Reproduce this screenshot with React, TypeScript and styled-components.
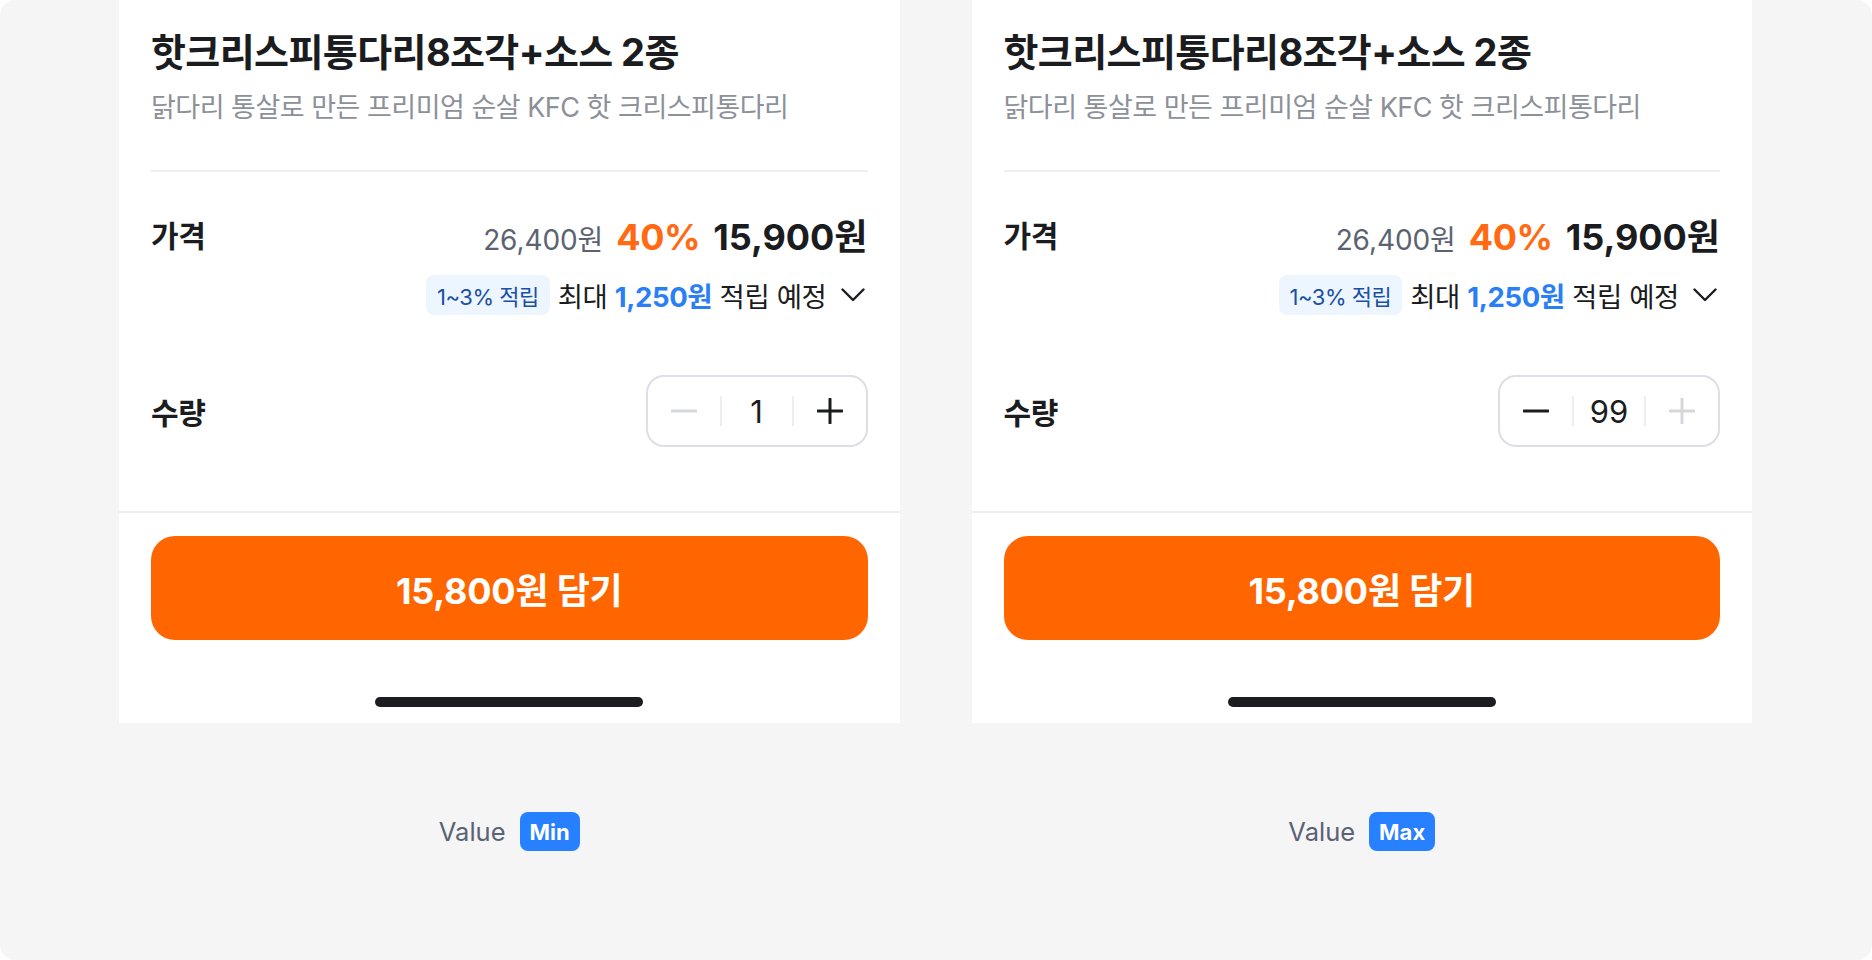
import React, { ReactElement } from 'react';
import styled, { createGlobalStyle } from 'styled-components';

const GlobalStyle = createGlobalStyle`
  * {
    box-sizing: border-box;
  }
  body {
    margin: 0;
    background: #ffffff;
    font-family: 'Inter', 'Noto Sans CJK KR', sans-serif;
  }
`;

const Frame = styled.div`
  width: 1872px;
  height: 960px;
  border-radius: 16px;
  background: #f5f5f5;
  display: flex;
  gap: 72px;
  padding: 0 120px 0 119px;
  overflow: hidden;
`;

const Column = styled.div`
  width: 781px;
  display: flex;
  flex-direction: column;
  align-items: center;
`;

const Card = styled.div`
  width: 100%;
  height: 723px;
  background: #ffffff;
  display: flex;
  flex-direction: column;
`;

const Body = styled.div`
  padding: 26px 32px 0;
  height: 511px;
`;

const Title = styled.div`
  font-size: 38px;
  line-height: 52px;
  font-weight: 700;
  color: #1b1c20;
  letter-spacing: -0.6px;
`;

const Subtitle = styled.div`
  margin-top: 10px;
  font-size: 27px;
  line-height: 40px;
  color: #8c9098;
  letter-spacing: -0.5px;
`;

const Divider = styled.div`
  height: 2px;
  background: #eeeff1;
  margin-top: 42px;
`;

const Row = styled.div<{ $top: number; $height: number }>`
  margin-top: ${(p) => p.$top}px;
  height: ${(p) => p.$height}px;
  display: flex;
  align-items: center;
  justify-content: space-between;
`;

const Label = styled.div`
  font-size: 30px;
  font-weight: 700;
  color: #1b1c20;
  letter-spacing: -0.3px;
`;

const Prices = styled.div`
  display: flex;
  align-items: baseline;
  gap: 13px;
`;

const Original = styled.span`
  font-size: 28px;
  color: #5b6372;
  letter-spacing: -0.1px;
`;

const Rate = styled.span`
  font-size: 36px;
  font-weight: 700;
  color: #ff6a13;
  letter-spacing: -0.4px;
`;

const Sale = styled.span`
  font-size: 36px;
  font-weight: 700;
  color: #1b1c20;
  letter-spacing: 0;
`;

const RewardRow = styled.div`
  margin-top: 19px;
  height: 40px;
  display: flex;
  justify-content: flex-end;
  align-items: center;
`;

const RewardBadge = styled.div`
  height: 40px;
  padding: 0 11px;
  border-radius: 8px;
  background: #edf5ff;
  color: #1a4fa6;
  font-size: 22px;
  letter-spacing: -0.5px;
  display: flex;
  align-items: center;
  margin-right: 8px;
`;

const RewardText = styled.div`
  font-size: 27.5px;
  color: #1b1c20;
  letter-spacing: -0.4px;
`;

const RewardAmount = styled.span`
  color: #2b7ff6;
  font-weight: 700;
`;

const Chevron = styled.svg`
  margin-left: 14px;
  margin-right: 3px;
`;

const Stepper = styled.div`
  width: 222px;
  height: 72px;
  border: 2px solid #dddfe4;
  border-radius: 18px;
  display: flex;
  align-items: center;
`;

const StepButton = styled.button<{ $disabled: boolean }>`
  width: 72px;
  height: 100%;
  border: none;
  background: none;
  padding: 0;
  display: flex;
  align-items: center;
  justify-content: center;
  color: ${(p) => (p.$disabled ? '#d4d7dc' : '#1b1c20')};
`;

const StepDivider = styled.div`
  width: 2px;
  height: 30px;
  background: #eceef0;
`;

const Count = styled.div`
  flex: 1;
  text-align: center;
  font-size: 31px;
  color: #1b1c20;
`;

const Footer = styled.div`
  border-top: 2px solid #eeeff1;
  padding: 23px 32px 0;
  display: flex;
  flex-direction: column;
  align-items: center;
`;

const CartButton = styled.button`
  width: 100%;
  height: 104px;
  border: none;
  border-radius: 24px;
  background: #ff6600;
  color: #ffffff;
  font-family: 'Inter', 'Noto Sans CJK KR', sans-serif;
  font-size: 36px;
  font-weight: 700;
  letter-spacing: -0.2px;
`;

const HomeIndicator = styled.div`
  margin-top: 57px;
  width: 268px;
  height: 10px;
  border-radius: 5px;
  background: #1c1d21;
`;

const Caption = styled.div`
  margin-top: 89px;
  display: flex;
  align-items: center;
  gap: 14px;
  font-family: 'Inter', sans-serif;
`;

const CaptionLabel = styled.span`
  font-size: 25.5px;
  color: #5a6275;
`;

const CaptionBadge = styled.span`
  height: 39px;
  padding: 0 10px;
  border-radius: 8px;
  background: #2680ff;
  color: #ffffff;
  font-size: 22px;
  font-weight: 700;
  display: flex;
  align-items: center;
`;

const MinusIcon = () => (
  <svg width="26" height="26" viewBox="0 0 26 26">
    <path d="M1 13h24" stroke="currentColor" strokeWidth="3" strokeLinecap="round" />
  </svg>
);

const PlusIcon = () => (
  <svg width="26" height="26" viewBox="0 0 26 26">
    <path d="M1 13h24M13 1v24" stroke="currentColor" strokeWidth="3" strokeLinecap="round" />
  </svg>
);

type ProductProps = {
  quantity: number;
  min: number;
  max: number;
  valueName: string;
};

const ProductSheet = ({ quantity, min, max, valueName }: ProductProps): ReactElement => {
  return (
    <Column>
      <Card>
        <Body>
          <Title>핫크리스피통다리8조각+소스 2종</Title>
          <Subtitle>닭다리 통살로 만든 프리미엄 순살 KFC 핫 크리스피통다리</Subtitle>
          <Divider />
          <Row $top={40} $height={44}>
            <Label>가격</Label>
            <Prices>
              <Original>26,400원</Original>
              <Rate>40%</Rate>
              <Sale>15,900원</Sale>
            </Prices>
          </Row>
          <RewardRow>
            <RewardBadge>1~3% 적립</RewardBadge>
            <RewardText>
              최대 <RewardAmount>1,250원</RewardAmount> 적립 예정
            </RewardText>
            <Chevron width="24" height="14" viewBox="0 0 24 14" fill="none">
              <path d="M1.5 1.5L12 12L22.5 1.5" stroke="#1b1c20" strokeWidth="2.4" strokeLinecap="round" strokeLinejoin="round" />
            </Chevron>
          </RewardRow>
          <Row $top={60} $height={72}>
            <Label>수량</Label>
            <Stepper>
              <StepButton $disabled={quantity <= min}>
                <MinusIcon />
              </StepButton>
              <StepDivider />
              <Count>{quantity}</Count>
              <StepDivider />
              <StepButton $disabled={quantity >= max}>
                <PlusIcon />
              </StepButton>
            </Stepper>
          </Row>
        </Body>
        <Footer>
          <CartButton>15,800원 담기</CartButton>
          <HomeIndicator />
        </Footer>
      </Card>
      <Caption>
        <CaptionLabel>Value</CaptionLabel>
        <CaptionBadge>{valueName}</CaptionBadge>
      </Caption>
    </Column>
  );
};

const App = (): ReactElement => {
  return (
    <>
      <GlobalStyle />
      <Frame>
        <ProductSheet quantity={1} min={1} max={99} valueName="Min" />
        <ProductSheet quantity={99} min={1} max={99} valueName="Max" />
      </Frame>
    </>
  );
};

export default App;
